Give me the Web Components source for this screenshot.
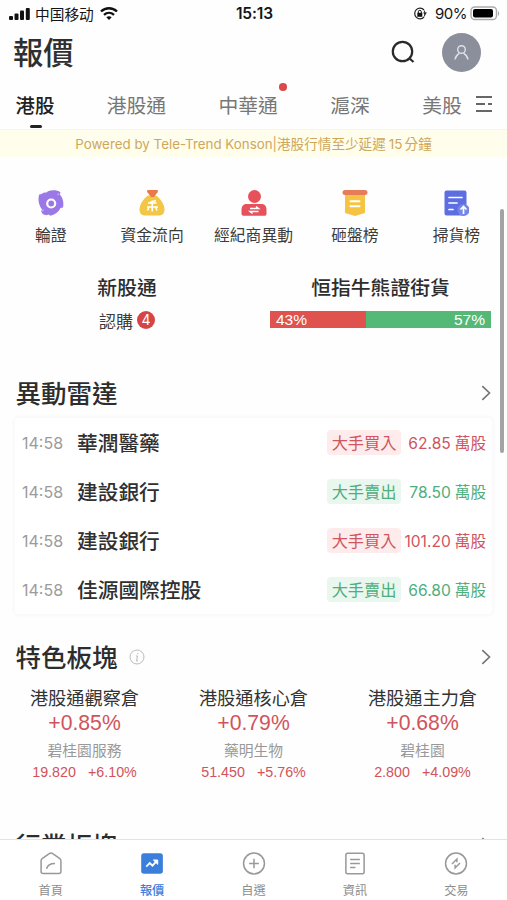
<!DOCTYPE html>
<html lang="zh-Hant">
<head>
<meta charset="utf-8">
<meta name="viewport" content="width=device-width, initial-scale=1">
<title>報價</title>
<style>
  body{
    margin: 0;
    background: #fefefe;
    color: #333;
    font-family: Inter, "Noto Sans CJK TC", sans-serif;
    overflow: hidden;
  }
</style>
</head>
<body>
<quote-app></quote-app>

<script>
// Base for every element: an open shadow root filled with the class markup
class BaseElement extends HTMLElement{
  connectedCallback(){
    if(!this.shadowRoot){
      this.attachShadow({mode: 'open'});
      this.shadowRoot.innerHTML = `<style>*{box-sizing: border-box;} :host{box-sizing: border-box;}</style>` + this.render();
    }
  }
  attr(name){
    return this.getAttribute(name) || '';
  }
}

const ICONS = {
  warrant: `<svg viewBox="0 0 26 26"><path fill="#9b78e8" d="M8.500 2.500L10 1.300C14-.3 19-.2 22.500 2.200L21.800 4.500C25 8 26 12.500 25 17.500L22.500 18C21 21.500 17.500 24.500 12.500 25.800L10.500 24.500 8.500 25.300C5.500 25 3.300 23.300 3.300 21L4 19.500C1 16-.5 9.500 1.200 4.500L3.500 4C4.700 2.800 6.500 2.200 8.500 2.500z"/><path d="M21 3.500l-1.500 1.700M4.200 21l1.500-1.500" stroke="#c3adf3" stroke-width="1.200"/><circle cx="13.200" cy="13.500" r="4" fill="none" stroke="#fff" stroke-width="2.200"/></svg>`,
  money: `<svg viewBox="0 0 26 26"><path fill="#f2c745" d="M9 5.500h8c4.500 3 8.500 9 8.500 14 0 4.500-2.500 6-6.500 6H7c-4 0-6.500-1.500-6.500-6 0-5 4-11 8.500-14z"/><path fill="#e9794c" d="M8.200 0h10.600v2L15 7h-3L8.200 2z"/><path d="M13.200 10.500v11M9 13h8.500M8 17h11M17 10.500l-6 2M10 17l-1.500 3.500M16.500 17l1.500 3.500" stroke="#fff" stroke-width="1.500" fill="none"/></svg>`,
  broker: `<svg viewBox="0 0 26 26"><circle cx="13.500" cy="6.500" r="6.500" fill="#e5525c"/><path fill="#e5525c" d="M5.500 14h15c3.500 0 5 2.500 5 6v3.500c0 1.500-.8 2.300-2.200 2.300H3c-1.500 0-2.500-.8-2.500-2.300V20c0-3.500 1.500-6 5-6z"/><path d="M9 18.500h8.500l-2.500-2M17.500 21.500H9l2.500 2" fill="none" stroke="#fff" stroke-width="1.500"/></svg>`,
  banner: `<svg viewBox="0 0 26 26"><path fill="#f6c443" d="M3 3h20v20l-10 3-10-3z"/><rect x=".5" y="0" width="25" height="5" rx="2.500" fill="#e57d58"/><path d="M8.500 11.300h9M8.500 16.300h9" stroke="#fff" stroke-width="2" stroke-linecap="round"/></svg>`,
  goods: `<svg viewBox="0 0 26 26"><rect x="1.500" y=".5" width="22" height="25" rx="2" fill="#5c6ee0"/><path d="M6 7.500h13M6 13h8M6 19.500h4" stroke="#fff" stroke-width="1.700" stroke-linecap="round"/><circle cx="20.500" cy="20" r="6" fill="#7586ea"/><path d="M20.500 24v-7M17.500 19.500l3-3 3 3" fill="none" stroke="#fff" stroke-width="1.700"/></svg>`,
  home: `<svg viewBox="0 0 26 26"><path d="M1.800 9.800c0-1 .4-1.700 1.200-2.300l8-5.700c1.200-.9 2.800-.9 4 0l8 5.700c.8.600 1.200 1.300 1.200 2.300V22c0 1.500-.8 2.300-2.300 2.300H4c-1.500 0-2.200-.8-2.200-2.300z"/><path d="M8 19c1-4.500 4-6 9.500-6"/></svg>`,
  quote: `<svg viewBox="0 0 26 26"><rect x=".8" y="1.500" width="24.500" height="23" rx="3" fill="#3b7fdc" stroke="none"/><path d="M6.500 16.500l4-4 3 3 4.500-5" stroke="#fff" stroke-width="2"/><path d="M14.500 9h5v5z" fill="#fff" stroke="#fff" stroke-width="1"/></svg>`,
  plus: `<svg viewBox="0 0 26 26"><circle cx="13" cy="13" r="11.800"/><path d="M13 7.500v11M7.500 13h11"/></svg>`,
  news: `<svg viewBox="0 0 26 26"><rect x="2.700" y="1.500" width="20.600" height="23" rx="2"/><path d="M7.500 8.500h11M7.500 13h11M7.500 17.500h6"/></svg>`,
  trade: `<svg viewBox="0 0 26 26"><circle cx="13" cy="13" r="11.800"/><path d="M8.500 13.500l5.500-5.500v3.500M12 14.500V18l5.500-5.500"/></svg>`,
  chevron: `<svg viewBox="0 0 10 16"><path d="M1.300 1.200L8.500 8l-7.200 6.800" fill="none" stroke="#777" stroke-width="1.700"/></svg>`
};

class StatusBar extends BaseElement{
  render(){
    return `
    <style>
      :host{display: grid; grid-template-columns: 1fr auto 1fr; align-items: center; height: 27px; padding: 0 7px 0 9px; color: #151515; font-size: 15px;}
      .side{display: flex; align-items: center;}
      .carrier{font-size: 14.700px; margin: 0 6px 0 4px;}
      .end{justify-content: flex-end;}
      .time{font-weight: 600; font-size: 15.500px; letter-spacing: -.1px;}
      .power{margin: 0 3px 0 8px; font-size: 15px; letter-spacing: -.5px;}
      svg{display: block;}
    </style>
    <div class="side">
      <svg width="22" height="14" viewBox="0 0 22 14" fill="#111"><rect x="0" y="9" width="4" height="4" rx="1"/><rect x="5.500" y="6.500" width="4" height="6.500" rx="1"/><rect x="11" y="3.500" width="4" height="9.500" rx="1"/><rect x="16.800" y="1" width="4" height="12" rx="1"/></svg>
      <span class="carrier">中国移动</span>
      <svg width="18" height="13" viewBox="0 0 18 13" fill="none" stroke="#111"><path d="M1 4.500c4.500-4.300 11.500-4.300 16 0" stroke-width="2.400"/><path d="M4 7.800c3-2.700 7-2.700 10 0" stroke-width="2.300"/><path d="M6.300 10.200c1.700-1.300 3.700-1.300 5.400 0L9 13z" fill="#111" stroke="none"/></svg>
    </div>
    <span class="time">15:13</span>
    <div class="side end">
      <svg width="14" height="13" viewBox="0 0 14 13"><path d="M11 3A5.300 5.300 0 1 0 11 10" fill="none" stroke="#222" stroke-width="1.200"/><path d="M11.300 3.500c.8 2 .8 4 0 6" fill="none" stroke="#222"/><path d="M10 5.500h4l-2 2.500z" fill="#222"/><rect x="4.300" y="5.800" width="5" height="4" fill="#111"/><path d="M5.300 6V4.800a1.500 1.500 0 0 1 3 0V6" fill="none" stroke="#111"/></svg>
      <span class="power">90%</span>
      <svg width="30" height="15" viewBox="0 0 30 15"><rect x="1" y="1" width="25.500" height="12.500" rx="3.800" fill="#fff" stroke="#aaa" stroke-width="1.400"/><rect x="3" y="3" width="20" height="8.500" rx="2" fill="#000"/><path d="M28 5c1.500 1 1.500 4 0 5z" fill="#aaa"/></svg>
    </div>`;
  }
}

class PageHeader extends BaseElement{
  render(){
    return `
    <style>
      :host{display: flex; align-items: center; height: 50px; padding: 0 26px 0 13px;}
      h1{margin: 0; padding-top: 2px; flex: 1; font-size: 30.300px; line-height: 40px; font-weight: 500; color: #2f2f2f;}
      svg{display: block;}
      .search{margin-right: 27px;}
    </style>
    <h1><slot></slot></h1>
    <svg class="search" width="24" height="24" viewBox="0 0 24 24" fill="none" stroke="#2a2a2a" stroke-width="2.200"><circle cx="11.500" cy="11.500" r="9.700"/><path d="M18 18l4.500 4"/></svg>
    <svg width="39" height="39" viewBox="0 0 39 39"><circle cx="19.500" cy="19.500" r="19.500" fill="#8b8f9c"/><g fill="none" stroke="#dfe2ea" stroke-width="1.400"><circle cx="19.500" cy="16.500" r="3.800"/><path d="M13 26.500c.5-3 2.200-5 4.300-6.200M26 26.500c-.5-3-2.200-5-4.300-6.200"/></g></svg>`;
  }
}

class MarketTabs extends BaseElement{
  render(){
    return `
    <style>
      :host{display: flex; align-items: center; height: 52px; padding: 6px 12px 0 15.500px; gap: 52.400px; font-size: 19.800px; line-height: 30px; color: #777;}
      svg{display: block; margin: -4px 0 0 -39px;}
    </style>
    <slot></slot>
    <svg width="18" height="18" viewBox="0 0 18 18" stroke="#666" stroke-width="1.800"><path d="M1 2h16M1 9h9M13 9h4M1 16h16"/></svg>`;
  }
}

class MarketTab extends BaseElement{
  render(){
    return `
    <style>
      :host{display: block; position: relative; white-space: nowrap;}
      :host([active]){color: #222; font-weight: 500; font-size: 19.400px;}
      :host([active])::after{content: ""; position: absolute; left: 14px; bottom: -7px; width: 12px; height: 3px; border-radius: 2px; background: #222;}
      :host([dot])::after{content: ""; position: absolute; right: -9px; top: -8px; width: 7.500px; height: 7.500px; border-radius: 50%; background: #d94b4b;}
    </style>
    <slot></slot>`;
  }
}

class NoticeBar extends BaseElement{
  render(){
    return `
    <style>
      :host{display: flex; align-items: center; justify-content: center; height: 28px; margin-bottom: 1px; padding-bottom: 2px; border-top: 1px solid #f5f5f1; background: #fffdeb; color: #cfa75c; font-size: 13.600px; white-space: nowrap;}
    </style>
    <slot></slot>`;
  }
}

class QuickLink extends BaseElement{
  render(){
    return `
    <style>
      :host{display: flex; flex: 1 1 0; min-width: 0; flex-direction: column; align-items: center; font-size: 15.800px; line-height: 22px; color: #3c3c3c; white-space: nowrap; gap: 9px;}
      svg{display: block; width: 26px; height: 26px;}
    </style>
    ${ICONS[this.attr('icon')]}
    <span><slot></slot></span>`;
  }
}

class PromoRow extends BaseElement{
  render(){
    return `
    <style>
      :host{display: grid; grid-template-columns: 254px 253px; text-align: center; padding-top: 28px; height: 127px;}
      h3{margin: 0; font-size: 19.800px; line-height: 26px; font-weight: 500; color: #2d2d2d;}
      .sub{display: flex; justify-content: center; align-items: center; gap: 4px; margin-top: 6px; height: 26px; font-size: 17px; color: #3c3c3c;}
      .badge{width: 18px; height: 18px; border-radius: 50%; background: #d64545; color: #fff; font: 14px/18px Inter, sans-serif;}
      .bar{display: flex; margin: 10px 16px 0; height: 17px; font: 15.500px/18px "Liberation Sans", sans-serif; color: #fff;}
      .bull{width: 43.500%; background: #e0524d; text-align: left; padding-left: 6px;}
      .bear{flex: 1; background: #54b877; text-align: right; padding-right: 6px;}
    </style>
    <div>
      <h3>新股通</h3>
      <div class="sub"><span>認購</span><span class="badge">4</span></div>
    </div>
    <div>
      <h3>恒指牛熊證街貨</h3>
      <div class="bar"><span class="bull">43%</span><span class="bear">57%</span></div>
    </div>`;
  }
}

class SectionTitle extends BaseElement{
  render(){
    const info = this.hasAttribute('info') ? `<svg class="info" width="16" height="16" viewBox="0 0 16 16" fill="none" stroke="#bbb"><circle cx="8" cy="8" r="7"/><path d="M8.800 3.800v1.500M7 7h1.500l-1 5h1.500"/></svg>` : '';
    return `
    <style>
      :host{display: flex; align-items: center; height: 36px; padding: 0 16px 0 15.500px;}
      h2{margin: 0; padding-top: 2px; font-size: 25.500px; line-height: 36px; font-weight: 500; color: #2d2d2d;}
      .info{margin-left: 11px;}
      .more{margin-left: auto; width: 10px; height: 16px;}
      .more svg{display: block;}
    </style>
    <h2><slot></slot></h2>${info}<span class="more">${ICONS.chevron}</span>`;
  }
}

class RadarRow extends BaseElement{
  render(){
    return `
    <style>
      :host{display: flex; align-items: center; height: 49px; --tone: #cf5560; --tint: #fdeceb;}
      :host([side="sell"]){--tone: #4fae7c; --tint: #e9f7ef;}
      .time{width: 55px; font-size: 16px; color: #9b9b9b;}
      .name{flex: 1; padding-top: 2px; font-size: 20.700px; font-weight: 500; color: #303030; line-height: 30px;}
      .tag{width: 74px; height: 25px; border-radius: 4px; background: var(--tint); color: var(--tone); text-align: center; font-size: 16.200px; line-height: 26px;}
      .value{width: 85px; text-align: right; color: var(--tone); font-size: 15.600px; line-height: 24px; padding-top: 2px; white-space: nowrap;}
      .value i{font-style: normal; margin-left: 4px;}
    </style>
    <span class="time">${this.attr('time')}</span>
    <span class="name"><slot></slot></span>
    <span class="tag">${this.getAttribute('side') == 'sell' ? '大手賣出' : '大手買入'}</span>
    <span class="value">${this.attr('value')}<i>萬股</i></span>`;
  }
}

class RadarCard extends BaseElement{
  render(){
    return `
    <style>
      :host{display: block; margin: 7px 15px 0 15px; padding: 0 6px 0 7px; border-radius: 4px; background: #fff; box-shadow: 0 0 5px rgba(0,0,0,.055);}
    </style>
    <slot></slot>`;
  }
}

class SectorItem extends BaseElement{
  render(){
    return `
    <style>
      :host{display: flex; flex: 1 1 0; flex-direction: column; align-items: center; white-space: nowrap; font-family: "Liberation Sans", "Noto Sans CJK TC", sans-serif; color: #d1535b;}
      .name{font-size: 18.200px; line-height: 26px; color: #333;}
      .rate{font-size: 21.200px; line-height: 22px;}
      .stock{font-size: 14.800px; line-height: 22px; margin-top: 6px; color: #999;}
      .price{display: flex; gap: 12px; font-size: 14.300px; line-height: 21px;}
    </style>
    <span class="name"><slot></slot></span>
    <span class="rate">${this.attr('rate')}</span>
    <span class="stock">${this.attr('stock')}</span>
    <span class="price"><span>${this.attr('price')}</span><span>${this.attr('change')}</span></span>`;
  }
}

class NavItem extends BaseElement{
  render(){
    return `
    <style>
      :host{display: flex; flex: 1 1 0; flex-direction: column; align-items: center; gap: 7px; padding-top: 12px; font-size: 12.200px; line-height: 18px; color: #8d8d8d;}
      :host([active]){color: #3b7fdc; font-weight: 500;}
      svg{display: block; width: 26px; height: 26px; fill: none; stroke: #999; stroke-width: 1.700;}
    </style>
    ${ICONS[this.attr('icon')]}
    <span><slot></slot></span>`;
  }
}

class QuoteApp extends BaseElement{
  render(){
    return `
    <style>
      :host{display: flex; flex-direction: column; height: 900px; width: 507px; overflow: hidden;}
      main{position: relative; flex: 1; min-height: 0; overflow: hidden;}
      .links{display: flex; padding-top: 32px;}
      .sectors{display: flex; padding: 11px 0 0; height: 152px;}
      .radar{margin-top: 1px;}
      .special{margin-top: 25px;}
      .thumb{position: absolute; right: 3px; top: 51px; width: 4px; height: 244px; border-radius: 2px; background: #a3a3a3;}
      .latin{font-size: 13.350px;}
      .days{margin: 0 2px 0 3px;}
      nav{display: flex; height: 61px; border-top: 1px solid #e3e3e3; background: #fff;}
    </style>
    <status-bar></status-bar>
    <page-header>報價</page-header>
    <market-tabs>
      <market-tab active>港股</market-tab>
      <market-tab>港股通</market-tab>
      <market-tab dot>中華通</market-tab>
      <market-tab>滬深</market-tab>
      <market-tab>美股</market-tab>
    </market-tabs>
    <notice-bar><span><span class="latin">Powered by Tele-Trend Konson|</span>港股行情至少延遲<span class="days">15</span>分鐘</span></notice-bar>
    <main>
      <div class="links">
        <quick-link icon="warrant">輪證</quick-link>
        <quick-link icon="money">資金流向</quick-link>
        <quick-link icon="broker">經紀商異動</quick-link>
        <quick-link icon="banner">砸盤榜</quick-link>
        <quick-link icon="goods">掃貨榜</quick-link>
      </div>
      <promo-row></promo-row>
      <section-title class="radar">異動雷達</section-title>
      <radar-card>
        <radar-row time="14:58" value="62.85">華潤醫藥</radar-row>
        <radar-row time="14:58" side="sell" value="78.50">建設銀行</radar-row>
        <radar-row time="14:58" value="101.20">建設銀行</radar-row>
        <radar-row time="14:58" side="sell" value="66.80">佳源國際控股</radar-row>
      </radar-card>
      <section-title class="special" info>特色板塊</section-title>
      <div class="sectors">
        <sector-item rate="+0.85%" stock="碧桂園服務" price="19.820" change="+6.10%">港股通觀察倉</sector-item>
        <sector-item rate="+0.79%" stock="藥明生物" price="51.450" change="+5.76%">港股通核心倉</sector-item>
        <sector-item rate="+0.68%" stock="碧桂園" price="2.800" change="+4.09%">港股通主力倉</sector-item>
      </div>
      <section-title>行業板塊</section-title>
      <div class="thumb"></div>
    </main>
    <nav>
      <nav-item icon="home">首頁</nav-item>
      <nav-item icon="quote" active>報價</nav-item>
      <nav-item icon="plus">自選</nav-item>
      <nav-item icon="news">資訊</nav-item>
      <nav-item icon="trade">交易</nav-item>
    </nav>`;
  }
}

customElements.define('status-bar', StatusBar);
customElements.define('page-header', PageHeader);
customElements.define('market-tabs', MarketTabs);
customElements.define('market-tab', MarketTab);
customElements.define('notice-bar', NoticeBar);
customElements.define('quick-link', QuickLink);
customElements.define('promo-row', PromoRow);
customElements.define('section-title', SectionTitle);
customElements.define('radar-row', RadarRow);
customElements.define('radar-card', RadarCard);
customElements.define('sector-item', SectorItem);
customElements.define('nav-item', NavItem);
customElements.define('quote-app', QuoteApp);
</script>
</body>
</html>
